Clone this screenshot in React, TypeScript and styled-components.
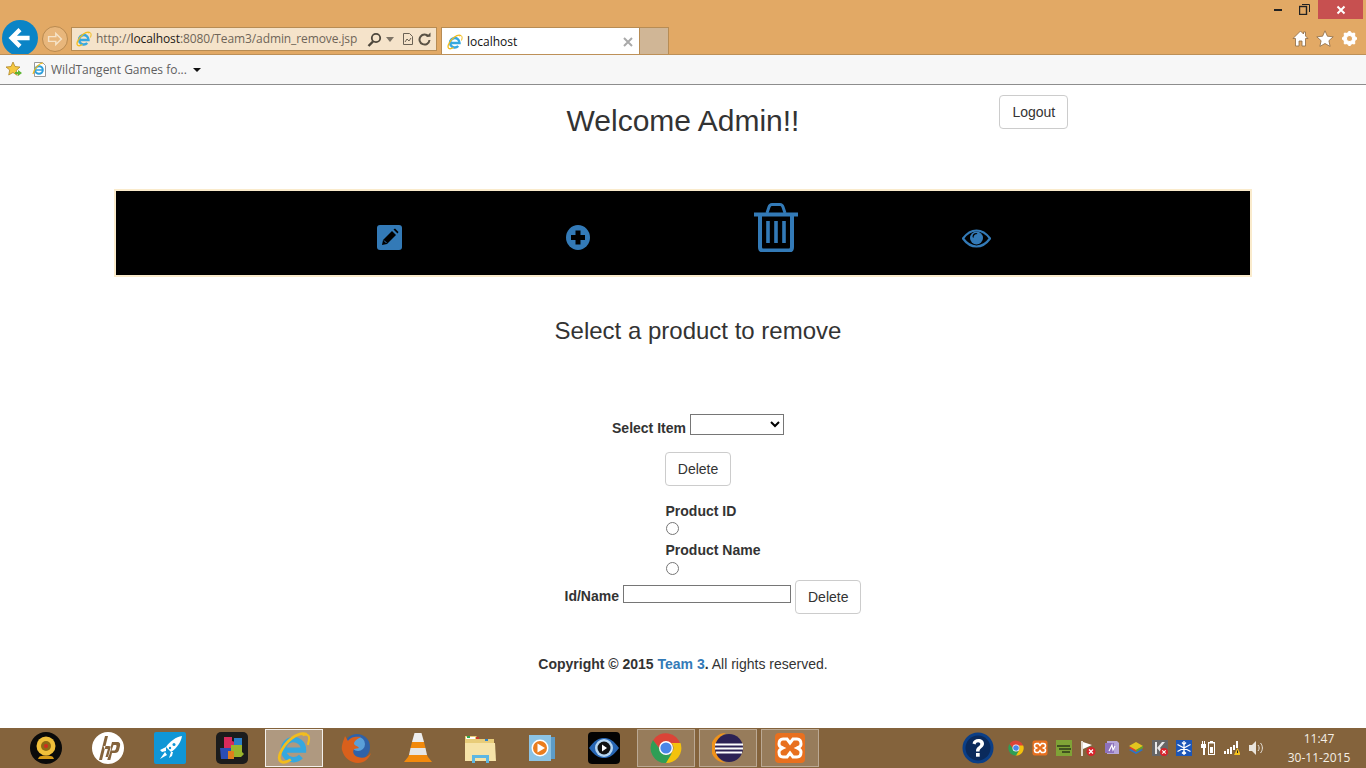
import React from "react";
import styled, { createGlobalStyle } from "styled-components";

const Global = createGlobalStyle`
  html, body { margin: 0; padding: 0; background: #fff; }
  * { box-sizing: border-box; }
  body { font-family: "Liberation Sans", Arial, sans-serif; font-size: 14px; line-height: 20px; color: #333; }
`;

const Page = styled.div`
  width: 1366px; height: 768px; display: flex; flex-direction: column; overflow: hidden; background: #fff;
`;

/* Browser chrome */
const Chrome = styled.header`
  height: 55px; flex: none; background: #e2a965; border-bottom: 1px solid #bd9058; overflow: hidden;
  display: flex; flex-direction: column;
`;
const WindowRow = styled.div`
  height: 20px; flex: none; display: flex; justify-content: flex-end; padding-right: 3px;
`;
const WinButton = styled.div<{ $w: number; $close?: boolean }>`
  width: ${p => p.$w}px; height: 19px; display: flex; align-items: center; justify-content: center;
  background: ${p => (p.$close ? "#c75050" : "transparent")};
`;
const NavRow = styled.div`
  height: 35px; flex: none; display: flex; align-items: flex-start; padding: 0 8px 0 2px;
`;
const BackButton = styled.div`
  width: 36px; height: 36px; border-radius: 50%; background: #0a84c6; display: flex; align-items: center; justify-content: center; flex: none;
`;
const ForwardButton = styled.div`
  width: 26px; height: 26px; margin: 6px 0 0 4px; border-radius: 50%; border: 1px solid #b98a50; background: #e8b67b;
  display: flex; align-items: center; justify-content: center; flex: none;
`;
const Address = styled.div`
  width: 366px; height: 24px; margin: 7px 0 0 3px; background: #f5e3ca; border: 1px solid #b78c54;
  display: flex; align-items: center; padding: 0 5px 0 4px; flex: none;
  font: 12px/20px "Open Sans", "Noto Sans", sans-serif; color: #6f6558;
`;
const Url = styled.span`
  margin-left: 4px; flex: 1; white-space: nowrap; letter-spacing: -0.1px;
  b { font-weight: 400; color: #1d1a16; }
`;
const AddressTools = styled.span`
  display: flex; align-items: center; gap: 4px; color: #5d5448;
`;
const Tab = styled.div`
  width: 199px; height: 28px; margin: 7px 0 0 4px; background: #fff; border: 1px solid #b78c54; border-bottom: none;
  display: flex; align-items: center; padding: 0 5px; flex: none;
  font: 12px/20px "Open Sans", "Noto Sans", sans-serif; color: #111;
`;
const TabTitle = styled.span`
  margin-left: 4px; flex: 1;
`;
const TabNew = styled.div`
  width: 29px; height: 28px; margin-top: 7px; background: #d0b696; border: 1px solid #b78c54; border-left: none; border-bottom: none; flex: none;
`;
const RightTools = styled.div`
  margin: 10px 0 0 auto; display: flex; gap: 7px; align-items: center;
`;

const Favorites = styled.nav`
  height: 30px; flex: none; background: #f7f7f7; border-bottom: 1px solid #8d8d8d;
  display: flex; align-items: center; padding-left: 6px;
  font: 12px/20px "Open Sans", "Noto Sans", sans-serif; color: #5f5f5f;
`;
const FavLink = styled.span`
  margin-left: 8px; display: flex; align-items: center; gap: 4px; white-space: nowrap;
`;
const Caret = styled.span`
  width: 0; height: 0; margin-left: 6px; border: 4px solid transparent; border-top: 4px solid #111; border-bottom: none;
`;

/* Page content */
const Main = styled.main`
  flex: 1; display: flex; flex-direction: column;
`;
const Header = styled.div`
  display: grid; grid-template-columns: 1fr auto 1fr; padding-top: 10px; height: 104px; align-items: start;
`;
const Title = styled.h2`
  grid-column: 2; margin: 9px 0 0; font-size: 30px; line-height: 33px; font-weight: 500; color: #333;
`;
const Button = styled.button`
  height: 34px; padding: 6px 12px; background: #fff; border: 1px solid #ccc; border-radius: 4px;
  font: 14px/20px "Liberation Sans", Arial, sans-serif; color: #333; flex: none;
`;
const LogoutButton = styled(Button)`
  grid-column: 3; justify-self: start; margin-left: 200px;
`;
const IconBar = styled.div`
  width: 1138px; height: 88px; margin: 0 auto; flex: none; background: #000; border: 2px solid #faebcc;
  display: flex; align-items: flex-end; gap: 164px; padding-left: 261px;
`;
const BarIcon = styled.a<{ $drop: number }>`
  display: block; line-height: 0; margin-bottom: ${p => p.$drop}px;
`;
const Subtitle = styled.h3`
  margin: 41px 0 0; padding-left: 30px; text-align: center; font-size: 24px; line-height: 26px; font-weight: 500; color: #333;
`;
const Row = styled.div<{ $shift: number; $top: number }>`
  display: flex; justify-content: center; padding-left: ${p => p.$shift}px; margin-top: ${p => p.$top}px;
`;
const Label = styled.label`
  font-weight: 700; white-space: nowrap;
`;
const FieldLabel = styled(Label)`
  margin: 4px 4px 0 0;
`;
const Picker = styled.select`
  width: 94px; height: 21px; margin: 0; background: #fff; border: 1px solid #767676; border-radius: 0; font: 13px "Liberation Sans", sans-serif;
`;
const RadioGroup = styled.div`
  display: flex; flex-direction: column; align-items: flex-start;
`;
const Radio = styled.input`
  width: 13px; height: 13px; margin: ${p => (p.$low ? "2px" : "1px")} 0 5px;
`;
const BottomRow = styled(Row)`
  align-items: flex-start;
`;
const BottomLabel = styled(Label)`
  margin: 6px 4px 0 0;
`;
const TextField = styled.input`
  width: 168px; height: 18px; margin: 5px 4px 0 0; padding: 0 2px; border: 1px solid #767676; border-radius: 0; background: #fff;
`;
const Copyright = styled.p`
  margin: 40px 0 0; text-align: center; color: #333;
  b { font-weight: 700; }
  a { font-weight: 700; color: #337ab7; text-decoration: none; }
`;

/* Taskbar */
const Taskbar = styled.footer`
  height: 40px; flex: none; background: #84633c; display: flex; align-items: center; padding-left: 17px; gap: 4px; color: #f3ece2;
`;
const Slot = styled.div<{ $state?: "active" | "running" }>`
  width: 58px; height: 38px; display: flex; align-items: center; justify-content: center; flex: none;
  border: 1px solid ${p => (p.$state === "active" ? "rgba(255,255,255,.85)" : p.$state === "running" ? "rgba(255,255,255,.35)" : "transparent")};
  background: ${p => (p.$state === "active" ? "rgba(255,255,255,.35)" : p.$state === "running" ? "rgba(255,255,255,.16)" : "transparent")};
`;
const Tray = styled.div`
  margin-left: auto; display: flex; align-items: center; gap: 8px;
`;
const HelpSlot = styled.div`
  width: 32px; height: 32px; margin-right: 6px; line-height: 0;
`;
const Clock = styled.div`
  width: 70px; margin: 0 12px 0 12px; text-align: center; font: 12px/19px "Open Sans", "Noto Sans", sans-serif; color: #f5efe6;
`;

/* Icons */
const IE = ({ s = 16 }: { s?: number }) => (
  <svg width={s} height={s} viewBox="0 0 32 32">
    <path d="M7.5 18H25A9.5 9.5 0 1 0 22.5 24" fill="none" stroke="#35a8e0" strokeWidth="5" />
    <path d="M28 3C20 0 8 9 3 21c-3 8 2 11 10 6" fill="none" stroke="#f2bd1e" strokeWidth="2.6" />
    <path d="M24 4c5-2 8 0 5 9" fill="none" stroke="#f2bd1e" strokeWidth="2" />
  </svg>
);
const ChromeLogo = ({ s = 32 }: { s?: number }) => (
  <svg width={s} height={s} viewBox="0 0 32 32">
    <path d="M3 8.5A15 15 0 0 1 30.5 13H16a6 6 0 0 0-5.6 4z" fill="#db4437" />
    <path d="M30.5 11A15 15 0 0 1 15 31l7-11a6 6 0 0 0-1-9z" fill="#f4c20d" />
    <path d="M3 8A15 15 0 0 0 16 31l6-10a7 7 0 0 1-11-2z" fill="#2f9e55" />
    <circle cx="16" cy="16" r="7" fill="#fff" />
    <circle cx="16" cy="16" r="5.6" fill="#4a86e8" />
  </svg>
);
const XamppLogo = ({ s = 32 }: { s?: number }) => (
  <svg width={s} height={s} viewBox="0 0 32 32">
    <rect x="1" y="1" width="30" height="30" rx="4" fill="#e8701f" />
    <path d="M9 7h4l3 4 3-4h4c3 0 4 2 4 5s-2 3-4 4c2 1 4 1 4 4s-1 5-4 5h-4l-3-4-3 4H9c-3 0-4-2-4-5s2-3 4-4c-2-1-4-1-4-4s1-5 4-5z" fill="none" stroke="#fff" strokeWidth="3" />
  </svg>
);

const Edit = () => (
  <svg width="25" height="25" viewBox="0 0 25 25">
    <rect width="25" height="25" rx="3" fill="#337ab7" />
    <path d="M5 20l1-5 9-9 4 4-9 9z" fill="#000" />
    <path d="M16.5 4.5l1.5-1 3.500 3.500-1 1.500z" fill="#000" />
    <path d="M7 15.500l2.500 2.500" stroke="#337ab7" strokeWidth="1" />
  </svg>
);
const Plus = () => (
  <svg width="24" height="25" viewBox="0 0 24 25">
    <ellipse cx="12" cy="12.500" rx="12" ry="12.500" fill="#337ab7" />
    <path d="M9.500 5.500h5v4.500H19v5h-4.500v4.500h-5V15H5v-5h4.500z" fill="#000" />
  </svg>
);
const Trash = () => (
  <svg width="44" height="49" viewBox="0 0 44 49" fill="none" stroke="#337ab7">
    <path d="M0 11.500h44" strokeWidth="4" />
    <path d="M13 10l2-6c.5-1.500 1.500-2.500 3-2.500h8c1.500 0 2.500 1 3 2.500l2 6" strokeWidth="3" />
    <path d="M6 12v32c0 2 1 3.500 3 3.500h26c2 0 3-1.500 3-3.500V12" strokeWidth="4" />
    <path d="M14 18v22M22 18v22M30 18v22" strokeWidth="3.600" />
  </svg>
);
const Eye = () => (
  <svg width="29" height="19" viewBox="0 0 29 19">
    <path d="M1 9.500C5 4 9.500 1.500 14.500 1.500S24 4 28 9.500C24 15 19.500 17.500 14.500 17.500S5 15 1 9.500z" fill="none" stroke="#337ab7" strokeWidth="2.200" />
    <circle cx="14.500" cy="9" r="6.500" fill="#337ab7" />
    <path d="M10.500 8a4 4 0 0 1 4-4l1 1a4 4 0 0 0-4 4z" fill="#000" />
  </svg>
);

const Webcam = () => (
  <svg width="32" height="32" viewBox="0 0 32 32">
    <circle cx="16" cy="16" r="16" fill="#0a0a0a" />
    <path d="M9 25c2-2 12-2 14 0l1 2H8z" fill="#d69a18" />
    <circle cx="16" cy="14" r="9.500" fill="#f0bf3a" />
    <circle cx="16" cy="14" r="5" fill="#8c6a14" />
    <circle cx="16" cy="14" r="2" fill="#d52b1e" />
  </svg>
);
const HP = () => (
  <svg width="32" height="32" viewBox="0 0 32 32">
    <circle cx="16" cy="16" r="16" fill="#fff" />
    <path d="M13 4h3L10 28H7zM11.500 14h5c2.500 0 3 1.500 2.500 3l-2.500 8h-3l2.400-8h-3.500zM20 10h5c3 0 3.500 2 3 4l-1 4c-.5 2-2 3-4 3h-3l-1.700 7h-3zM21.500 13l-2 5.500h2.500c1 0 1.500-.5 2-2l.500-2c.2-1-.2-1.500-1-1.500z" fill="#84633c" fillRule="evenodd" />
  </svg>
);
const Rocket = () => (
  <svg width="32" height="32" viewBox="0 0 32 32">
    <rect width="32" height="32" rx="2" fill="#0f96d6" />
    <path d="M28 4c-1 6-5 12-11 16l-5-5C16 9 22 5 28 4z" fill="#fff" />
    <circle cx="20" cy="12.500" r="1.500" fill="#0f96d6" />
    <circle cx="16" cy="16" r="1.200" fill="#0f96d6" />
    <path d="M12 15l-6 3 2 2 4-1zM17 20l-2 6 3-2 1-4zM11 20l-5 7 7-4z" fill="#fff" />
  </svg>
);
const Puzzle = () => (
  <svg width="32" height="32" viewBox="0 0 32 32">
    <rect width="32" height="32" rx="5" fill="#1c1c1c" />
    <path d="M8 5h8v4l3 1v6H8z" fill="#d92b5c" />
    <path d="M18 6h8v8l-3-1-5 1z" fill="#2a7fc9" />
    <path d="M15 13h11v7l2 2-3 3H15z" fill="#9ab52c" />
    <path d="M4 16h11v5l2 2-2 4H5z" fill="#2b4db5" />
    <path d="M12 19h6v8h-6z" fill="#e07f1c" />
  </svg>
);
const Firefox = () => (
  <svg width="32" height="32" viewBox="0 0 32 32">
    <circle cx="17" cy="15" r="13" fill="#2f62a8" />
    <circle cx="18" cy="12" r="7" fill="#5aa0d8" />
    <path d="M5 4c-1 4-4 9-3 14 2 8 9 13 16 13 6 0 11-4 13-10-3 4-8 6-13 4-4-1-6-5-4-8l5-1c-1-2-4-2-5-4 0-3 3-5 7-7C16 4 10 5 8 9 7 7 6 6 5 4z" fill="#d9601c" />
  </svg>
);
const Vlc = () => (
  <svg width="28" height="32" viewBox="0 0 28 32">
    <path d="M10.500 1h7L20 10H8z" fill="#eeeeee" />
    <path d="M8 10h12l1.500 6h-15z" fill="#f28a0d" />
    <path d="M6.500 16h15l1.500 7H5z" fill="#e6e6e6" />
    <path d="M5 23h18l1 2 4 5H0l4-5z" fill="#f28a0d" />
  </svg>
);
const Folder = () => (
  <svg width="32" height="30" viewBox="0 0 32 30">
    <path d="M1 3h11l3 3h15v20H1z" fill="#e8cc79" />
    <path d="M2 4h9v2H2z" fill="#fff" />
    <path d="M1 10h30l1 18H1z" fill="#f6e3a8" />
    <path d="M3 3h3v2H3z" fill="#2fa84f" />
    <path d="M12 4h3v2h-3z" fill="#c73a2c" />
    <path d="M21 6h3v2h-3z" fill="#2a7fc9" />
    <path d="M8 22h17v8h-3v-5H11v5H8z" fill="#5cb7e4" />
  </svg>
);
const Media = () => (
  <svg width="26" height="28" viewBox="0 0 26 28">
    <rect x="6" y="3" width="20" height="22" fill="#5d9cc7" />
    <rect x="0" y="1" width="22" height="26" fill="#8cc3e4" />
    <circle cx="11" cy="14" r="8.500" fill="#fff" />
    <circle cx="11" cy="14" r="7" fill="#ea7d1e" />
    <path d="M8.500 9.500L16 14l-7.500 4.500z" fill="#fff" />
  </svg>
);
const PowerEye = () => (
  <svg width="32" height="32" viewBox="0 0 32 32">
    <rect width="32" height="32" rx="4" fill="#030303" />
    <path d="M1 16C7 8 11 6 16 6s9 2 15 10c-6 8-10 10-15 10S7 24 1 16z" fill="#2766b4" />
    <circle cx="16" cy="16" r="9" fill="#b5d5f0" />
    <circle cx="16" cy="16" r="6.500" fill="#111" />
    <path d="M14 12.500l5 3.500-5 3.500z" fill="#fff" />
  </svg>
);
const Eclipse = () => (
  <svg width="32" height="30" viewBox="0 0 32 30">
    <path d="M14 0a15 15 0 0 0 0 30 16 16 0 0 1 0-30z" fill="#f0931a" />
    <circle cx="17" cy="15" r="14" fill="#2c2255" />
    <path d="M3 11.500h28M3 15.500h28M4 19.500h26" stroke="#fff" strokeWidth="1.800" />
  </svg>
);
const Help = () => (
  <svg width="32" height="32" viewBox="0 0 32 32">
    <circle cx="16" cy="16" r="15.500" fill="#0b3f87" />
    <circle cx="16" cy="16" r="12.500" fill="#0a2a5c" />
    <path d="M10.500 11.500c.5-3 3-4.500 5.800-4.500 3.500 0 5.700 2 5.700 4.800 0 4-4.500 4-4.500 7.700h-3.500c0-5 4.300-5 4.300-7.500 0-1-1-1.800-2.200-1.800-1.300 0-2.200.8-2.500 2.200z" fill="#fff" />
    <rect x="14" y="21" width="3.700" height="3.700" fill="#fff" />
  </svg>
);
const Bars = () => (
  <svg width="16" height="16" viewBox="0 0 16 16">
    <rect width="16" height="16" fill="#7fa336" />
    <path d="M1 6h13M3 9h12M6 12h8" stroke="#2f3a1a" strokeWidth="1.400" />
  </svg>
);
const FlagX = () => (
  <svg width="16" height="16" viewBox="0 0 16 16">
    <path d="M2 1v15" stroke="#fff" strokeWidth="1.500" />
    <path d="M3 2l9 3-9 4z" fill="#fff" />
    <circle cx="11" cy="11.500" r="4.500" fill="#d8232a" />
    <path d="M9 9.500l4 4M13 9.500l-4 4" stroke="#fff" strokeWidth="1.200" />
  </svg>
);
const OneNote = () => (
  <svg width="16" height="16" viewBox="0 0 16 16">
    <path d="M3 1h10l2 2v11H3z" fill="#b7a6d8" />
    <rect x="1" y="3" width="9" height="10" fill="#8e72bd" />
    <path d="M5 11l3-6 1 5 2-4" fill="none" stroke="#fff" strokeWidth="1.200" />
  </svg>
);
const Stack = () => (
  <svg width="16" height="16" viewBox="0 0 16 16">
    <path d="M1 10l7-4 7 4-7 4z" fill="#2b74c9" />
    <path d="M1 8l7-4 7 4-7 4z" fill="#d8432f" />
    <path d="M1 6l7-4 7 4-7 4z" fill="#e3c51f" />
    <path d="M8 10l7-4v2l-7 4z" fill="#5aa82c" />
  </svg>
);
const KBox = () => (
  <svg width="16" height="16" viewBox="0 0 16 16">
    <rect width="16" height="16" fill="#666" />
    <path d="M3 2h2v12H3zM5 8l5-6h3L8 8l5 6h-3z" fill="#e8e8e8" />
    <circle cx="12" cy="12" r="4" fill="#d8232a" />
    <path d="M10.300 10.300l3.400 3.400M13.700 10.300l-3.400 3.400" stroke="#fff" strokeWidth="1.100" />
  </svg>
);
const Snow = () => (
  <svg width="16" height="16" viewBox="0 0 16 16">
    <rect width="16" height="16" fill="#1c56b8" />
    <path d="M8 1v14M1.500 4.500l13 7M14.500 4.500l-13 7M6 2.500l2 2 2-2M6 13.500l2-2 2 2" stroke="#fff" strokeWidth="1.300" fill="none" />
  </svg>
);
const Battery = () => (
  <svg width="16" height="16" viewBox="0 0 16 16" fill="#fff">
    <path d="M2 1h1v3h1V1h1v3h1v4H5v7H3V8H1V4h1z" />
    <path d="M10 1h3v1h2v13H8V2h2zM9 3.500V14h5V3.500z" fillRule="evenodd" />
    <rect x="10" y="7" width="3" height="6" />
  </svg>
);
const Signal = () => (
  <svg width="16" height="16" viewBox="0 0 16 16">
    <path d="M0 11h2v3H0zM3 9h2v5H3zM6 7h2v7H6zM9 5h2v5H9zM12 1h2v7h-2z" fill="#fff" />
    <path d="M10 15l3.500-7 3.500 7z" fill="#f6c21c" />
    <rect x="13" y="10.500" width="1" height="2.500" fill="#222" />
  </svg>
);
const Speaker = () => (
  <svg width="16" height="16" viewBox="0 0 16 16">
    <path d="M1 5h3l4-4v14l-4-4H1z" fill="#e9e4dc" />
    <path d="M10 5c1.500 2 1.500 4 0 6M12.500 3c2.500 3 2.500 7 0 10" fill="none" stroke="#e9e4dc" strokeWidth="1" />
  </svg>
);

const Home = () => (
  <svg width="17" height="17" viewBox="0 0 17 17">
    <path d="M8.500 1L1 8.500h2.500V16h3.500v-5h3v5h3.500V8.500H16l-2.500-2.500V2h-2v2z" fill="#fff" stroke="#8b6a44" strokeWidth=".8" />
  </svg>
);
const Star = () => (
  <svg width="18" height="17" viewBox="0 0 18 17">
    <path d="M9 .8l2.400 5.400 5.800.6-4.300 3.900 1.200 5.700L9 13.500l-5.100 2.900 1.200-5.700L.8 6.800l5.800-.6z" fill="#fff" stroke="#8b6a44" strokeWidth=".8" />
  </svg>
);
const Gear = () => (
  <svg width="17" height="17" viewBox="0 0 17 17">
    <circle cx="8.500" cy="8.500" r="5" fill="none" stroke="#fff" strokeWidth="3" />
    <path d="M8.500 1v15M1 8.500h15M3.200 3.200l10.600 10.600M13.800 3.200L3.200 13.800" stroke="#fff" strokeWidth="2.400" />
    <circle cx="8.500" cy="8.500" r="2.500" fill="#e2a965" />
  </svg>
);
const Arrow = ({ c, w }: { c: string; w: number }) => (
  <svg width={w} height={w} viewBox="0 0 20 20">
    <path d="M18 10H3M10 3l-7 7 7 7" fill="none" stroke={c} strokeWidth="3.600" />
  </svg>
);
const ForwardArrow = () => (
  <svg width="16" height="16" viewBox="0 0 20 20">
    <path d="M2 7h9V3l7 7-7 7v-4H2z" fill="none" stroke="#f6e3c8" strokeWidth="1.800" />
  </svg>
);

const App = () => (
  <Page>
    <Global />
    <Chrome>
      <WindowRow>
        <WinButton $w={27}>
          <svg width="8" height="3" viewBox="0 0 8 3"><rect width="8" height="2" y="1" fill="#222" /></svg>
        </WinButton>
        <WinButton $w={27}>
          <svg width="11" height="11" viewBox="0 0 11 11" fill="none" stroke="#222"><rect x=".5" y="2.500" width="7" height="8" strokeWidth="1.400" /><path d="M3 .5h7.500V8" /></svg>
        </WinButton>
        <WinButton $w={45} $close>
          <svg width="10" height="10" viewBox="0 0 10 10"><path d="M1.500 1.500l7 7M8.500 1.500l-7 7" stroke="#fff" strokeWidth="2" /></svg>
        </WinButton>
      </WindowRow>
      <NavRow>
        <BackButton><Arrow c="#fff" w={24} /></BackButton>
        <ForwardButton><ForwardArrow /></ForwardButton>
        <Address>
          <IE />
          <Url>http://<b>localhost</b>:8080/Team3/admin_remove.jsp</Url>
          <AddressTools>
            <svg width="15" height="15" viewBox="0 0 15 15" fill="none" stroke="#4d463b" strokeWidth="1.800"><circle cx="9" cy="6" r="4.200" /><path d="M6 9.500L1.500 14" strokeWidth="2.400" /></svg>
            <svg width="8" height="5" viewBox="0 0 8 5"><path d="M0 0h8L4 5z" fill="#7d7365" /></svg>
            <svg width="12" height="14" viewBox="0 0 12 14" style={{ marginLeft: 4 }} fill="none" stroke="#6b6255"><path d="M1.500 1.500h6l3 3v8h-9z" /><path d="M3 10l2-3 2 2 2-3" /></svg>
            <svg width="13" height="14" viewBox="0 0 13 14" fill="none" stroke="#5a5245" strokeWidth="2"><path d="M10.500 4.500a5 5 0 1 0 1 3.500" /><path d="M8 4.800h4.500V.5z" fill="#5a5245" stroke="none" /></svg>
          </AddressTools>
        </Address>
        <Tab>
          <IE />
          <TabTitle>localhost</TabTitle>
          <svg width="10" height="10" viewBox="0 0 10 10" style={{ marginRight: 1 }}><path d="M1 1l8 8M9 1l-8 8" stroke="#a9a9a9" strokeWidth="2" /></svg>
        </Tab>
        <TabNew />
        <RightTools>
          <Home />
          <Star />
          <Gear />
        </RightTools>
      </NavRow>
    </Chrome>
    <Favorites>
      <svg width="17" height="17" viewBox="0 0 17 17">
        <path d="M7 1l2 4.500 5 .5-3.700 3.400 1 5L7 11.500 2.700 14l1-5L0 6l5-.5z" fill="#f5c842" stroke="#a67c1c" strokeWidth=".7" />
        <path d="M9 11h3V9l4 3-4 3v-2H9z" fill="#5cb531" />
      </svg>
      <FavLink>
        <svg width="16" height="17" viewBox="0 0 16 17">
          <path d="M3.500 1.500h8l3 3v11h-11z" fill="#fff" stroke="#9a9a9a" />
          <circle cx="8" cy="9" r="3.800" fill="none" stroke="#2d9fdc" strokeWidth="2" />
          <path d="M4 9h8" stroke="#2d9fdc" strokeWidth="1.500" />
          <path d="M12 2C8 2 3 8 2 13" fill="none" stroke="#efb91c" strokeWidth="1.200" />
        </svg>
        WildTangent Games fo...
      </FavLink>
      <Caret />
    </Favorites>
    <Main>
      <Header>
        <Title>Welcome Admin!!</Title>
        <LogoutButton>Logout</LogoutButton>
      </Header>
      <IconBar>
        <BarIcon $drop={25}><Edit /></BarIcon>
        <BarIcon $drop={25}><Plus /></BarIcon>
        <BarIcon $drop={23}><Trash /></BarIcon>
        <BarIcon $drop={27}><Eye /></BarIcon>
      </IconBar>
      <Subtitle>Select a product to remove</Subtitle>
      <Row $shift={30} $top={70}>
        <FieldLabel>Select Item</FieldLabel>
        <Picker />
      </Row>
      <Row $shift={30} $top={14}>
        <Button>Delete</Button>
      </Row>
      <Row $shift={60} $top={15}>
        <RadioGroup>
          <Label>Product ID</Label>
          <Radio type="radio" />
          <Label>Product Name</Label>
          <Radio type="radio" $low />
        </RadioGroup>
      </Row>
      <BottomRow $shift={60} $top={0}>
        <BottomLabel>Id/Name</BottomLabel>
        <TextField />
        <Button>Delete</Button>
      </BottomRow>
      <Copyright><b>Copyright © 2015 </b><a>Team 3</a><b>.</b> All rights reserved.</Copyright>
    </Main>
    <Taskbar>
      <Slot><Webcam /></Slot>
      <Slot><HP /></Slot>
      <Slot><Rocket /></Slot>
      <Slot><Puzzle /></Slot>
      <Slot $state="active"><IE s={34} /></Slot>
      <Slot><Firefox /></Slot>
      <Slot><Vlc /></Slot>
      <Slot><Folder /></Slot>
      <Slot><Media /></Slot>
      <Slot><PowerEye /></Slot>
      <Slot $state="running"><ChromeLogo /></Slot>
      <Slot $state="running"><Eclipse /></Slot>
      <Slot $state="running"><XamppLogo /></Slot>
      <Tray>
        <HelpSlot><Help /></HelpSlot>
        <ChromeLogo s={16} />
        <XamppLogo s={16} />
        <Bars />
        <FlagX />
        <OneNote />
        <Stack />
        <KBox />
        <Snow />
        <Battery />
        <Signal />
        <Speaker />
        <Clock>11:47<br />30-11-2015</Clock>
      </Tray>
    </Taskbar>
  </Page>
);

export default App;
